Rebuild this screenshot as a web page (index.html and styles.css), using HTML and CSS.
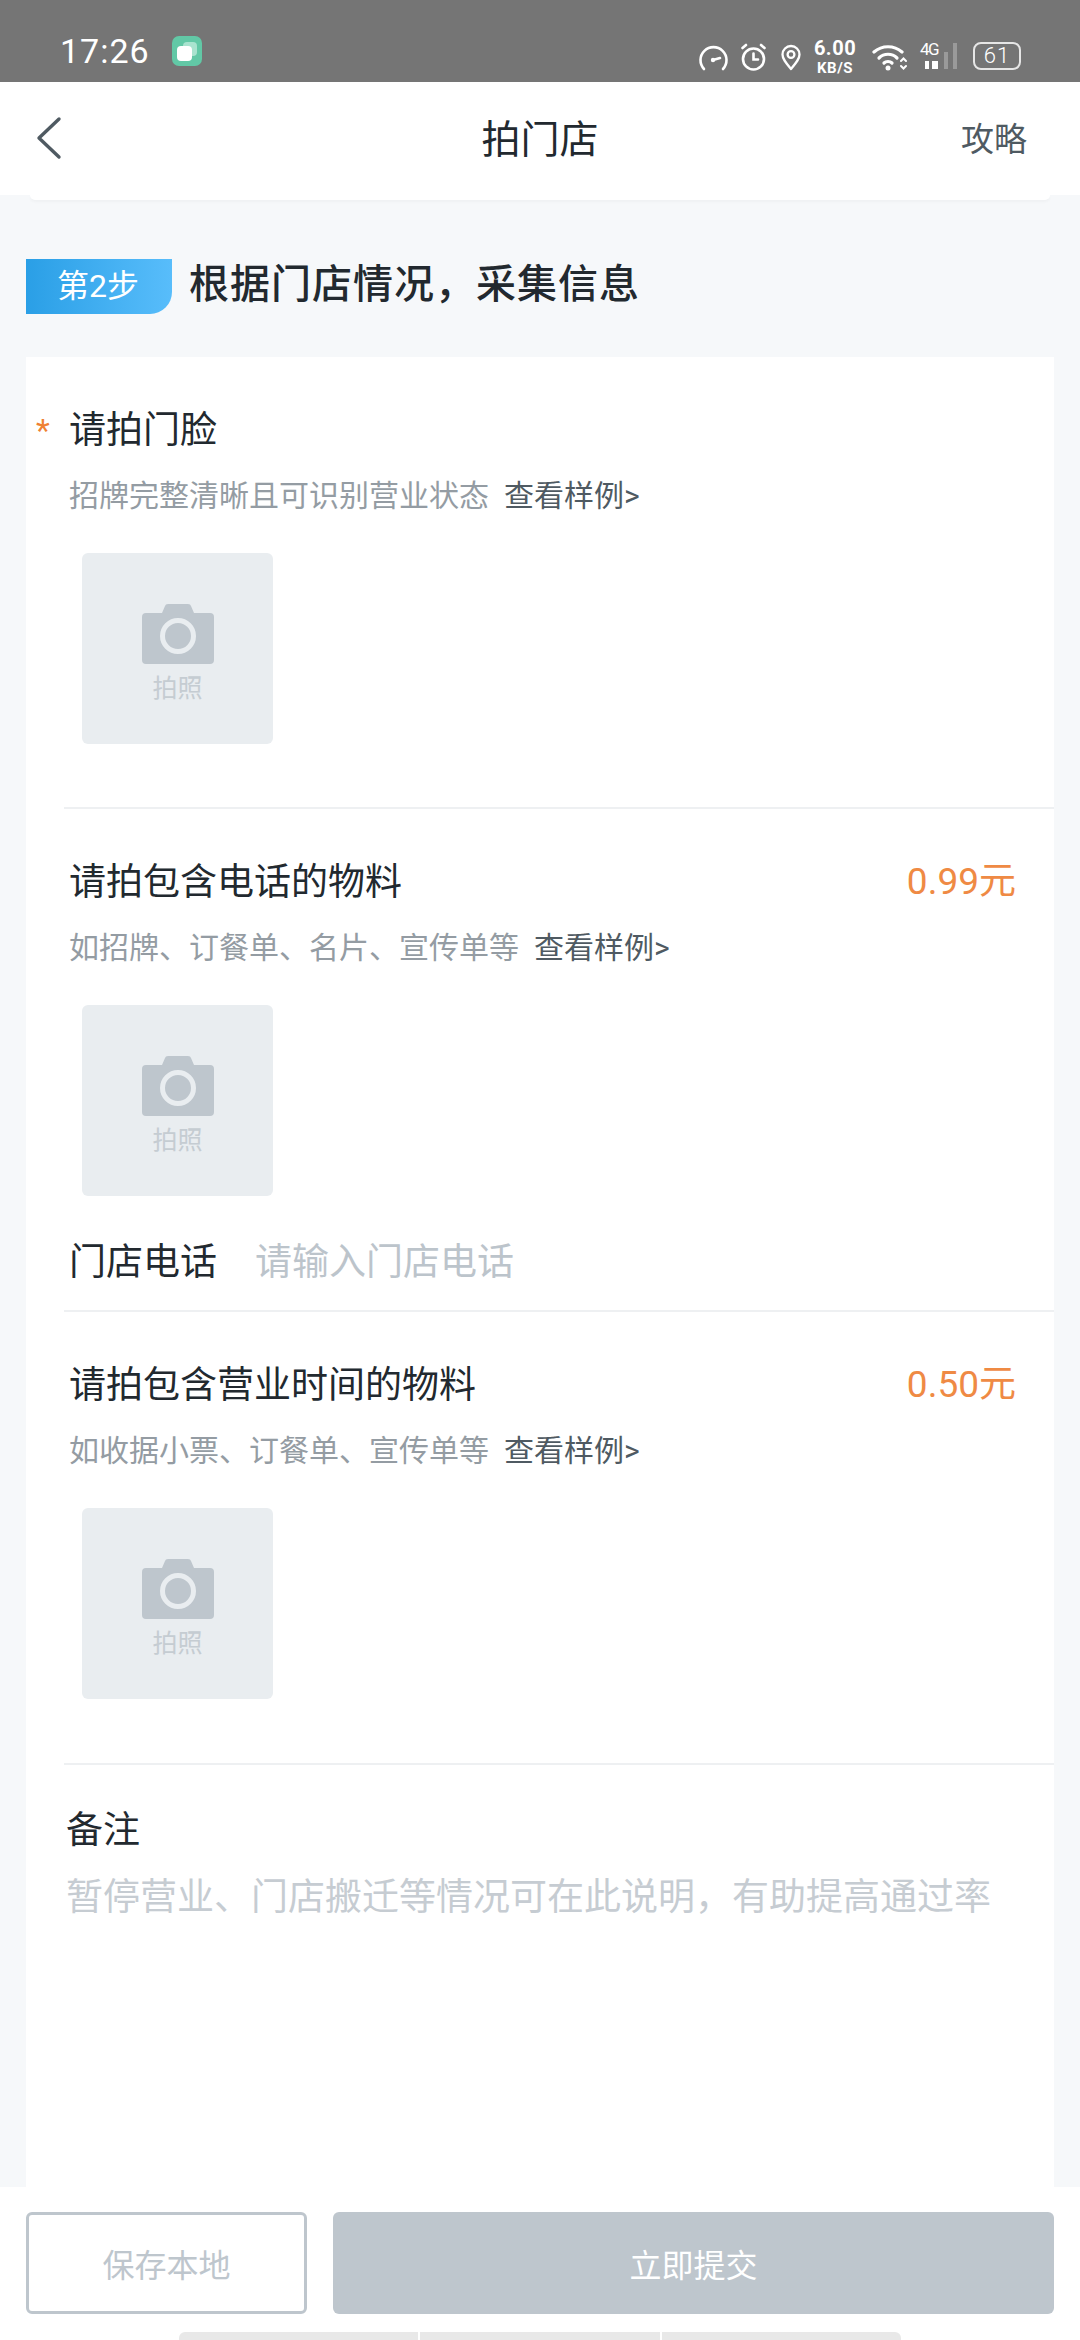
FILE: index.html
```html
<!DOCTYPE html>
<html lang="zh-CN">
<head>
    <meta charset="UTF-8">
    <meta name="viewport" content="width=device-width, initial-scale=1.0">
    <title>拍门店</title>
    <link rel="stylesheet" href="styles.css">
</head>
<body>

    <!-- Status bar -->
    <div class="statusbar">
        <div class="status-left">
            <span class="time">17:26</span>
            <svg class="app-icon" width="30" height="30" viewBox="0 0 30 30">
                <rect width="30" height="30" rx="7" fill="#62c8a6"/>
                <rect x="11" y="6" width="14" height="14" rx="4" fill="#a9e3cf"/>
                <rect x="5" y="10" width="15" height="15" rx="4" fill="#fff"/>
            </svg>
        </div>
        <div class="status-right">
            <svg class="ic-speedo" width="29" height="26" viewBox="0 0 29 26" fill="none" stroke="#fff" stroke-width="2.6" stroke-linecap="round">
                <path d="M5 24A13 13 0 1 1 24 24"/>
                <path d="M14 15L21 13"/>
                <circle cx="14" cy="15" r="2.200" fill="#fff" stroke="none"/>
            </svg>
            <svg class="ic-alarm" width="25" height="28" viewBox="0 0 25 28" fill="none" stroke="#fff" stroke-width="2.6" stroke-linecap="round">
                <circle cx="12.500" cy="16" r="10.500"/>
                <path d="M12.500 10.500V16.500H17"/>
                <path d="M1.500 5L5 2M23.500 5L20 2"/>
            </svg>
            <svg class="ic-pin" width="20" height="27" viewBox="0 0 20 27" fill="none" stroke="#fff" stroke-width="2.300">
                <path d="M10 25C5 19 1.500 15 1.500 10.500A8.500 8.500 0 0 1 18.500 10.500C18.500 15 15 19 10 25Z" stroke-linejoin="round"/>
                <circle cx="10" cy="10.500" r="3.400"/>
            </svg>
            <div class="speed">
                <span class="speed-num">6.00</span>
                <span class="speed-unit">KB/S</span>
            </div>
            <svg class="ic-wifi" width="35" height="27" viewBox="0 0 35 27" fill="none" stroke="#fff" stroke-width="3.200" stroke-linecap="round">
                <path d="M2 8C10 1 22 1 30 8"/>
                <path d="M7 14C12 9 20 9 25 14"/>
                <path d="M12 19C14 17 18 17 20 19"/>
                <circle cx="16" cy="24" r="2.500" fill="#fff" stroke="none"/>
                <path d="M29 17L31.500 14.500L34 17M29 22L31.500 24.500L34 22" stroke-width="2"/>
            </svg>
            <div class="signal">
                <span class="signal-tag">4G</span>
                <svg width="37" height="27" viewBox="0 0 37 27">
                    <rect x="5" y="19" width="4" height="8" fill="#fff"/>
                    <rect x="12" y="19" width="6" height="8" fill="#fff"/>
                    <rect x="24" y="10" width="4" height="17" fill="#9a9a9a"/>
                    <rect x="33" y="1" width="4" height="26" fill="#9a9a9a"/>
                </svg>
            </div>
            <div class="battery"><span>61</span></div>
        </div>
    </div>

    <!-- Navbar -->
    <nav class="navbar">
        <svg class="back" width="26" height="44" viewBox="0 0 26 44" fill="none" stroke="#4f5a62" stroke-width="3.4" stroke-linecap="round" stroke-linejoin="round">
            <path d="M23 3L3 22L23 41"/>
        </svg>
        <div class="nav-title">拍门店</div>
        <div class="nav-link">攻略</div>
    </nav>
    <div class="nav-lip"></div>

    <!-- Step heading -->
    <div class="step">
        <div class="step-badge">第2步</div>
        <h2 class="step-title">根据门店情况，采集信息</h2>
    </div>

    <div class="card">
        <section class="item item-first">
            <div class="item-head">
                <div class="item-name"><span class="star">*</span>请拍门脸</div>
            </div>
            <div class="hint">招牌完整清晰且可识别营业状态<a class="sample">查看样例&gt;</a></div>
            <div class="photo">
                <svg width="72" height="60" viewBox="0 0 72 60">
                    <path d="M4 9H20L23 2Q23.500 0 26 0H46Q48.500 0 49 2L52 9H68Q72 9 72 13V56Q72 60 68 60H4Q0 60 0 56V13Q0 9 4 9Z" fill="#bec6cd"/>
                    <circle cx="36" cy="32" r="15.500" fill="none" stroke="#e9edf0" stroke-width="5"/>
                </svg>
                <span>拍照</span>
            </div>
        </section>

        <section class="item item-phone">
            <div class="item-head">
                <div class="item-name">请拍包含电话的物料</div>
                <div class="price">0.99元</div>
            </div>
            <div class="hint">如招牌、订餐单、名片、宣传单等<a class="sample">查看样例&gt;</a></div>
            <div class="photo">
                <svg width="72" height="60" viewBox="0 0 72 60">
                    <path d="M4 9H20L23 2Q23.500 0 26 0H46Q48.500 0 49 2L52 9H68Q72 9 72 13V56Q72 60 68 60H4Q0 60 0 56V13Q0 9 4 9Z" fill="#bec6cd"/>
                    <circle cx="36" cy="32" r="15.500" fill="none" stroke="#e9edf0" stroke-width="5"/>
                </svg>
                <span>拍照</span>
            </div>
            <div class="field">
                <span class="field-label">门店电话</span>
                <span class="field-holder">请输入门店电话</span>
            </div>
        </section>

        <section class="item">
            <div class="item-head">
                <div class="item-name">请拍包含营业时间的物料</div>
                <div class="price">0.50元</div>
            </div>
            <div class="hint">如收据小票、订餐单、宣传单等<a class="sample">查看样例&gt;</a></div>
            <div class="photo">
                <svg width="72" height="60" viewBox="0 0 72 60">
                    <path d="M4 9H20L23 2Q23.500 0 26 0H46Q48.500 0 49 2L52 9H68Q72 9 72 13V56Q72 60 68 60H4Q0 60 0 56V13Q0 9 4 9Z" fill="#bec6cd"/>
                    <circle cx="36" cy="32" r="15.500" fill="none" stroke="#e9edf0" stroke-width="5"/>
                </svg>
                <span>拍照</span>
            </div>
        </section>

        <section class="remark">
            <div class="remark-label">备注</div>
            <div class="remark-holder">暂停营业、门店搬迁等情况可在此说明，有助提高通过率</div>
        </section>
    </div>

    <!-- Bottom buttons -->
    <div class="bottombar">
        <div class="actions">
            <button class="btn-save">保存本地</button>
            <button class="btn-submit">立即提交</button>
        </div>
        <div class="gesture">
            <span></span>
            <span></span>
            <span></span>
        </div>
    </div>

</body>
</html>
```

FILE: styles.css
```css
* {
    box-sizing: border-box;
}

html, body {
    margin: 0;
    padding: 0;
}

body {
    width: 1080px;
    height: 2340px;
    overflow: hidden;
    display: flex;
    flex-direction: column;
    font-family: Roboto, "Noto Sans CJK SC", sans-serif;
    background-color: #f6f8fa;
    color: #22292f;
}

/* Status bar */
.statusbar {
    height: 82px;
    flex: none;
    background-color: #757575;
    color: #fff;
    display: flex;
    justify-content: space-between;
    align-items: flex-end;
    padding: 0 59px 11px 60px;
}

.status-left {
    display: flex;
    align-items: center;
    gap: 22px;
}

.time {
    font-size: 34px;
    line-height: 40px;
    letter-spacing: 1px;
}

.status-right {
    display: flex;
    align-items: flex-end;
    gap: 13px;
}

.ic-pin {
    margin: 0 -1px 0 2px;
}

.speed {
    display: flex;
    flex-direction: column;
    align-items: center;
    gap: 3px;
    width: 44px;
    font-weight: 700;
    margin: 0 2px -5px 0;
}

.speed-num {
    font-size: 20px;
    line-height: 18px;
    letter-spacing: 0.5px;
}

.speed-unit {
    font-size: 15px;
    line-height: 16px;
    letter-spacing: 0.5px;
}

.signal {
    position: relative;
    width: 37px;
    height: 27px;
    display: flex;
    align-items: flex-end;
    margin-bottom: 2px;
}

.signal-tag {
    position: absolute;
    left: 0;
    top: -1px;
    font-size: 17px;
    line-height: 17px;
    letter-spacing: -1.5px;
}

.battery {
    width: 48px;
    height: 28px;
    border: 2px solid #e6e6e6;
    border-radius: 8px;
    font-size: 22px;
    line-height: 24px;
    font-weight: 300;
    text-align: center;
    letter-spacing: 1px;
    margin-left: 3px;
    margin-bottom: 1px;
}

/* Navbar */
.navbar {
    height: 113px;
    flex: none;
    background-color: #fff;
    display: flex;
    justify-content: space-between;
    align-items: center;
    padding: 0 53px 0 36px;
    position: relative;
}

.nav-title {
    position: absolute;
    left: 0;
    right: 0;
    text-align: center;
    font-size: 39px;
    padding-bottom: 5px;
}

.nav-link {
    font-size: 33px;
    color: #4f5a62;
    padding-bottom: 3px;
}

.back {
    margin-top: -2px;
}

.nav-lip {
    height: 5px;
    flex: none;
    margin: 0 30px;
    background-color: #fff;
    border-radius: 0 0 8px 8px;
    box-shadow: 0 2px 3px rgba(0, 0, 0, 0.03);
}

/* Step heading */
.step {
    flex: none;
    display: flex;
    align-items: center;
    gap: 17px;
    margin: 59px 0 43px 26px;
    height: 55px;
}

.step-badge {
    width: 146px;
    height: 55px;
    background: linear-gradient(90deg, #2a9fe6, #58bdfb);
    border-bottom-right-radius: 22px;
    color: #fff;
    font-size: 32px;
    line-height: 55px;
    text-align: center;
    padding-right: 2px;
}

.step-title {
    margin: 0;
    font-size: 40px;
    font-weight: 500;
    letter-spacing: 1px;
    color: #22292f;
    padding-bottom: 12px;
}

/* Form card */
.card {
    flex: 1;
    margin: 0 26px;
    background-color: #fff;
    padding-left: 38px;
}

.item {
    border-bottom: 2px solid #eef0f2;
    padding-top: 51px;
    height: 453px;
}

.item-first {
    height: 452px;
}

.item-phone {
    height: 503px;
}

.item-head {
    display: flex;
    justify-content: space-between;
    align-items: center;
    height: 46px;
    padding: 0 38px 0 5px;
}

.item-name {
    font-size: 37px;
    line-height: 46px;
    position: relative;
}

.star {
    position: absolute;
    left: -33px;
    top: -1px;
    color: #ef8133;
    font-size: 32px;
}

.price {
    font-size: 37px;
    line-height: 46px;
    color: #ef8a44;
    margin-top: -2px;
}

.hint {
    margin-top: 21px;
    margin-left: 5px;
    font-size: 30px;
    line-height: 42px;
    color: #949ca3;
    display: flex;
}

.sample {
    margin-left: 15px;
    color: #4f5a62;
}

.photo {
    width: 191px;
    height: 191px;
    margin: 36px 0 0 18px;
    background-color: #e9edf0;
    border-radius: 6px;
    display: flex;
    flex-direction: column;
    align-items: center;
    padding-top: 51px;
    font-size: 25px;
    line-height: 32px;
    color: #c5ccd2;
}

.photo span {
    margin-top: 9px;
}

.field {
    display: flex;
    gap: 38px;
    align-items: center;
    margin: 43px 0 0 5px;
    font-size: 37px;
    line-height: 48px;
}

.field-holder {
    color: #bcc4cb;
}

.remark {
    padding: 43px 0 0 2px;
}

.remark-label {
    font-size: 37px;
    line-height: 46px;
}

.remark-holder {
    margin-top: 20px;
    font-size: 37px;
    line-height: 48px;
    color: #c6ccd2;
    white-space: nowrap;
}

/* Bottom buttons */
.bottombar {
    flex: none;
    height: 153px;
    background-color: #fff;
    padding: 25px 26px 0 26px;
}

.actions {
    display: flex;
    gap: 26px;
}

.actions button {
    height: 102px;
    border-radius: 6px;
    font-family: inherit;
    font-size: 32px;
}

.btn-save {
    width: 281px;
    background-color: #fff;
    border: 3px solid #bec6cd;
    color: #bec6cd;
}

.btn-submit {
    flex: 1;
    background-color: #bec6cd;
    border: none;
    color: #fff;
}

.gesture {
    display: flex;
    gap: 2px;
    width: 722px;
    height: 8px;
    margin: 18px 0 0 153px;
}

.gesture span {
    flex: 1;
    background-color: #e8e8e8;
}

.gesture span:first-child {
    border-top-left-radius: 6px;
}

.gesture span:last-child {
    border-top-right-radius: 6px;
}
```
